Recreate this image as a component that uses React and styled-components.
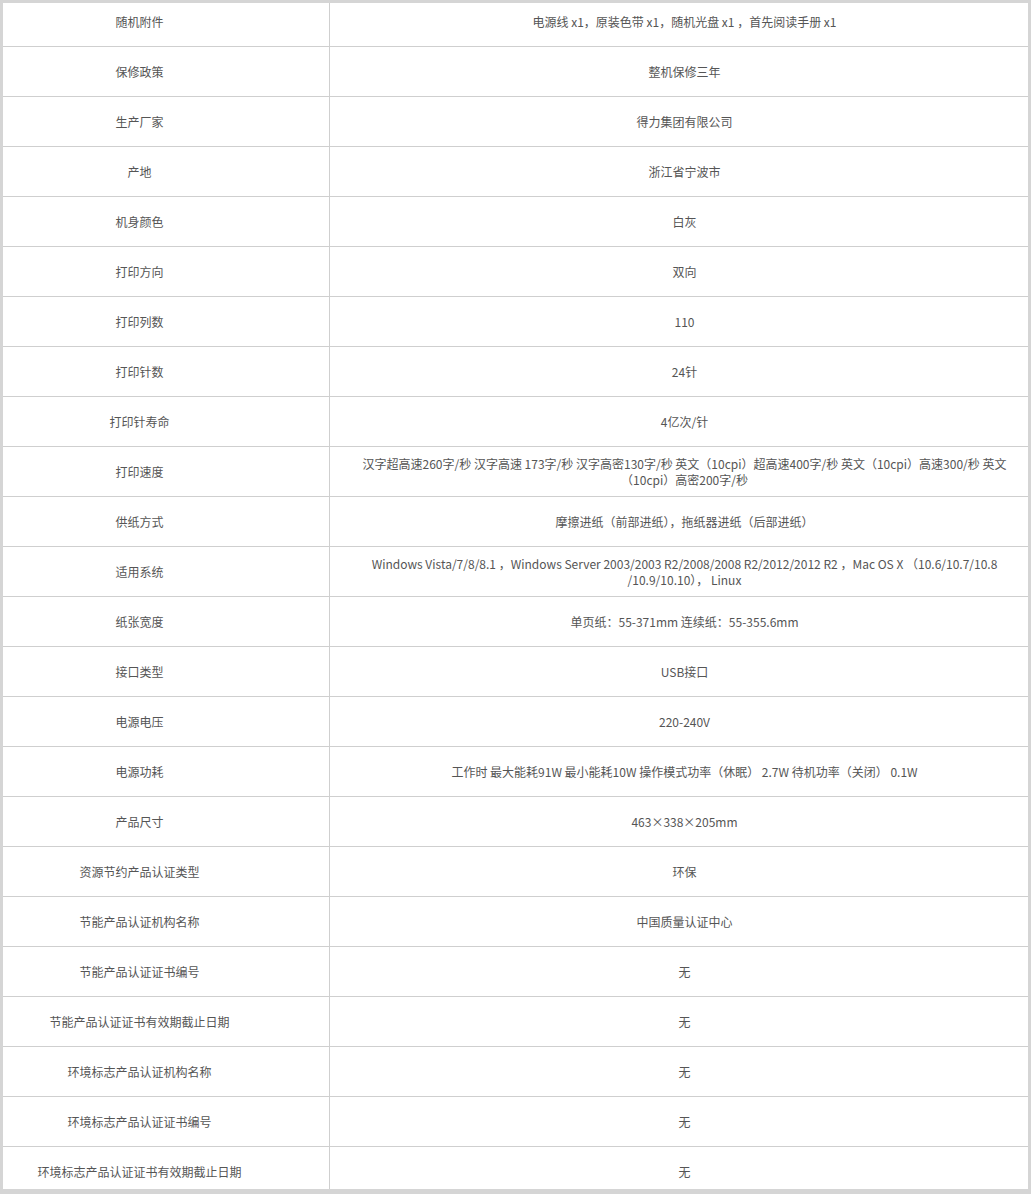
import React from "react";
import styled, { createGlobalStyle } from "styled-components";

const Global = createGlobalStyle`
  body {
    margin: 0;
    background: #fff;
    font-family: "Noto Sans CJK SC", "Noto Sans", sans-serif;
  }
`;

const Frame = styled.div`
  width: 1031px;
  height: 1194px;
  box-sizing: border-box;
  border: 3px solid #d5d5d5;
  border-bottom-width: 5px;
  overflow: hidden;
`;

const Table = styled.div`
  margin-top: -6px;
`;

const Row = styled.div`
  display: grid;
  grid-template-columns: 327px 1fr;
  min-height: 49px;
  border-bottom: 1px solid #cfcfcf;
`;

const Cell = styled.div`
  display: flex;
  align-items: center;
  justify-content: center;
  text-align: center;
  padding: 0 8px 0 19px;
  font-size: 12px;
  line-height: 16px;
  color: #555;
`;

const Label = styled(Cell)`
  padding: 0 53px 0 0;
  border-right: 1px solid #cfcfcf;
`;

const specs = [
  ["随机附件", "电源线 x1，原装色带 x1，随机光盘 x1 ，首先阅读手册 x1"],
  ["保修政策", "整机保修三年"],
  ["生产厂家", "得力集团有限公司"],
  ["产地", "浙江省宁波市"],
  ["机身颜色", "白灰"],
  ["打印方向", "双向"],
  ["打印列数", "110"],
  ["打印针数", "24针"],
  ["打印针寿命", "4亿次/针"],
  [
    "打印速度",
    "汉字超高速260字/秒 汉字高速 173字/秒 汉字高密130字/秒 英文（10cpi）超高速400字/秒 英文（10cpi）高速300/秒 英文（10cpi）高密200字/秒",
  ],
  ["供纸方式", "摩擦进纸（前部进纸），拖纸器进纸（后部进纸）"],
  [
    "适用系统",
    "Windows Vista/7/8/8.1 ，Windows Server 2003/2003 R2/2008/2008 R2/2012/2012 R2 ，Mac OS X （10.6/10.7/10.8 /10.9/10.10）， Linux",
  ],
  ["纸张宽度", "单页纸：55-371mm 连续纸：55-355.6mm"],
  ["接口类型", "USB接口"],
  ["电源电压", "220-240V"],
  ["电源功耗", "工作时 最大能耗91W 最小能耗10W 操作模式功率（休眠） 2.7W 待机功率（关闭） 0.1W"],
  ["产品尺寸", "463×338×205mm"],
  ["资源节约产品认证类型", "环保"],
  ["节能产品认证机构名称", "中国质量认证中心"],
  ["节能产品认证证书编号", "无"],
  ["节能产品认证证书有效期截止日期", "无"],
  ["环境标志产品认证机构名称", "无"],
  ["环境标志产品认证证书编号", "无"],
  ["环境标志产品认证证书有效期截止日期", "无"],
];

export default function App() {
  return (
    <>
      <Global />
      <Frame>
        <Table>
          {specs.map(([k, v]) => (
            <Row key={k}>
              <Label>{k}</Label>
              <Cell>{v}</Cell>
            </Row>
          ))}
        </Table>
      </Frame>
    </>
  );
}
